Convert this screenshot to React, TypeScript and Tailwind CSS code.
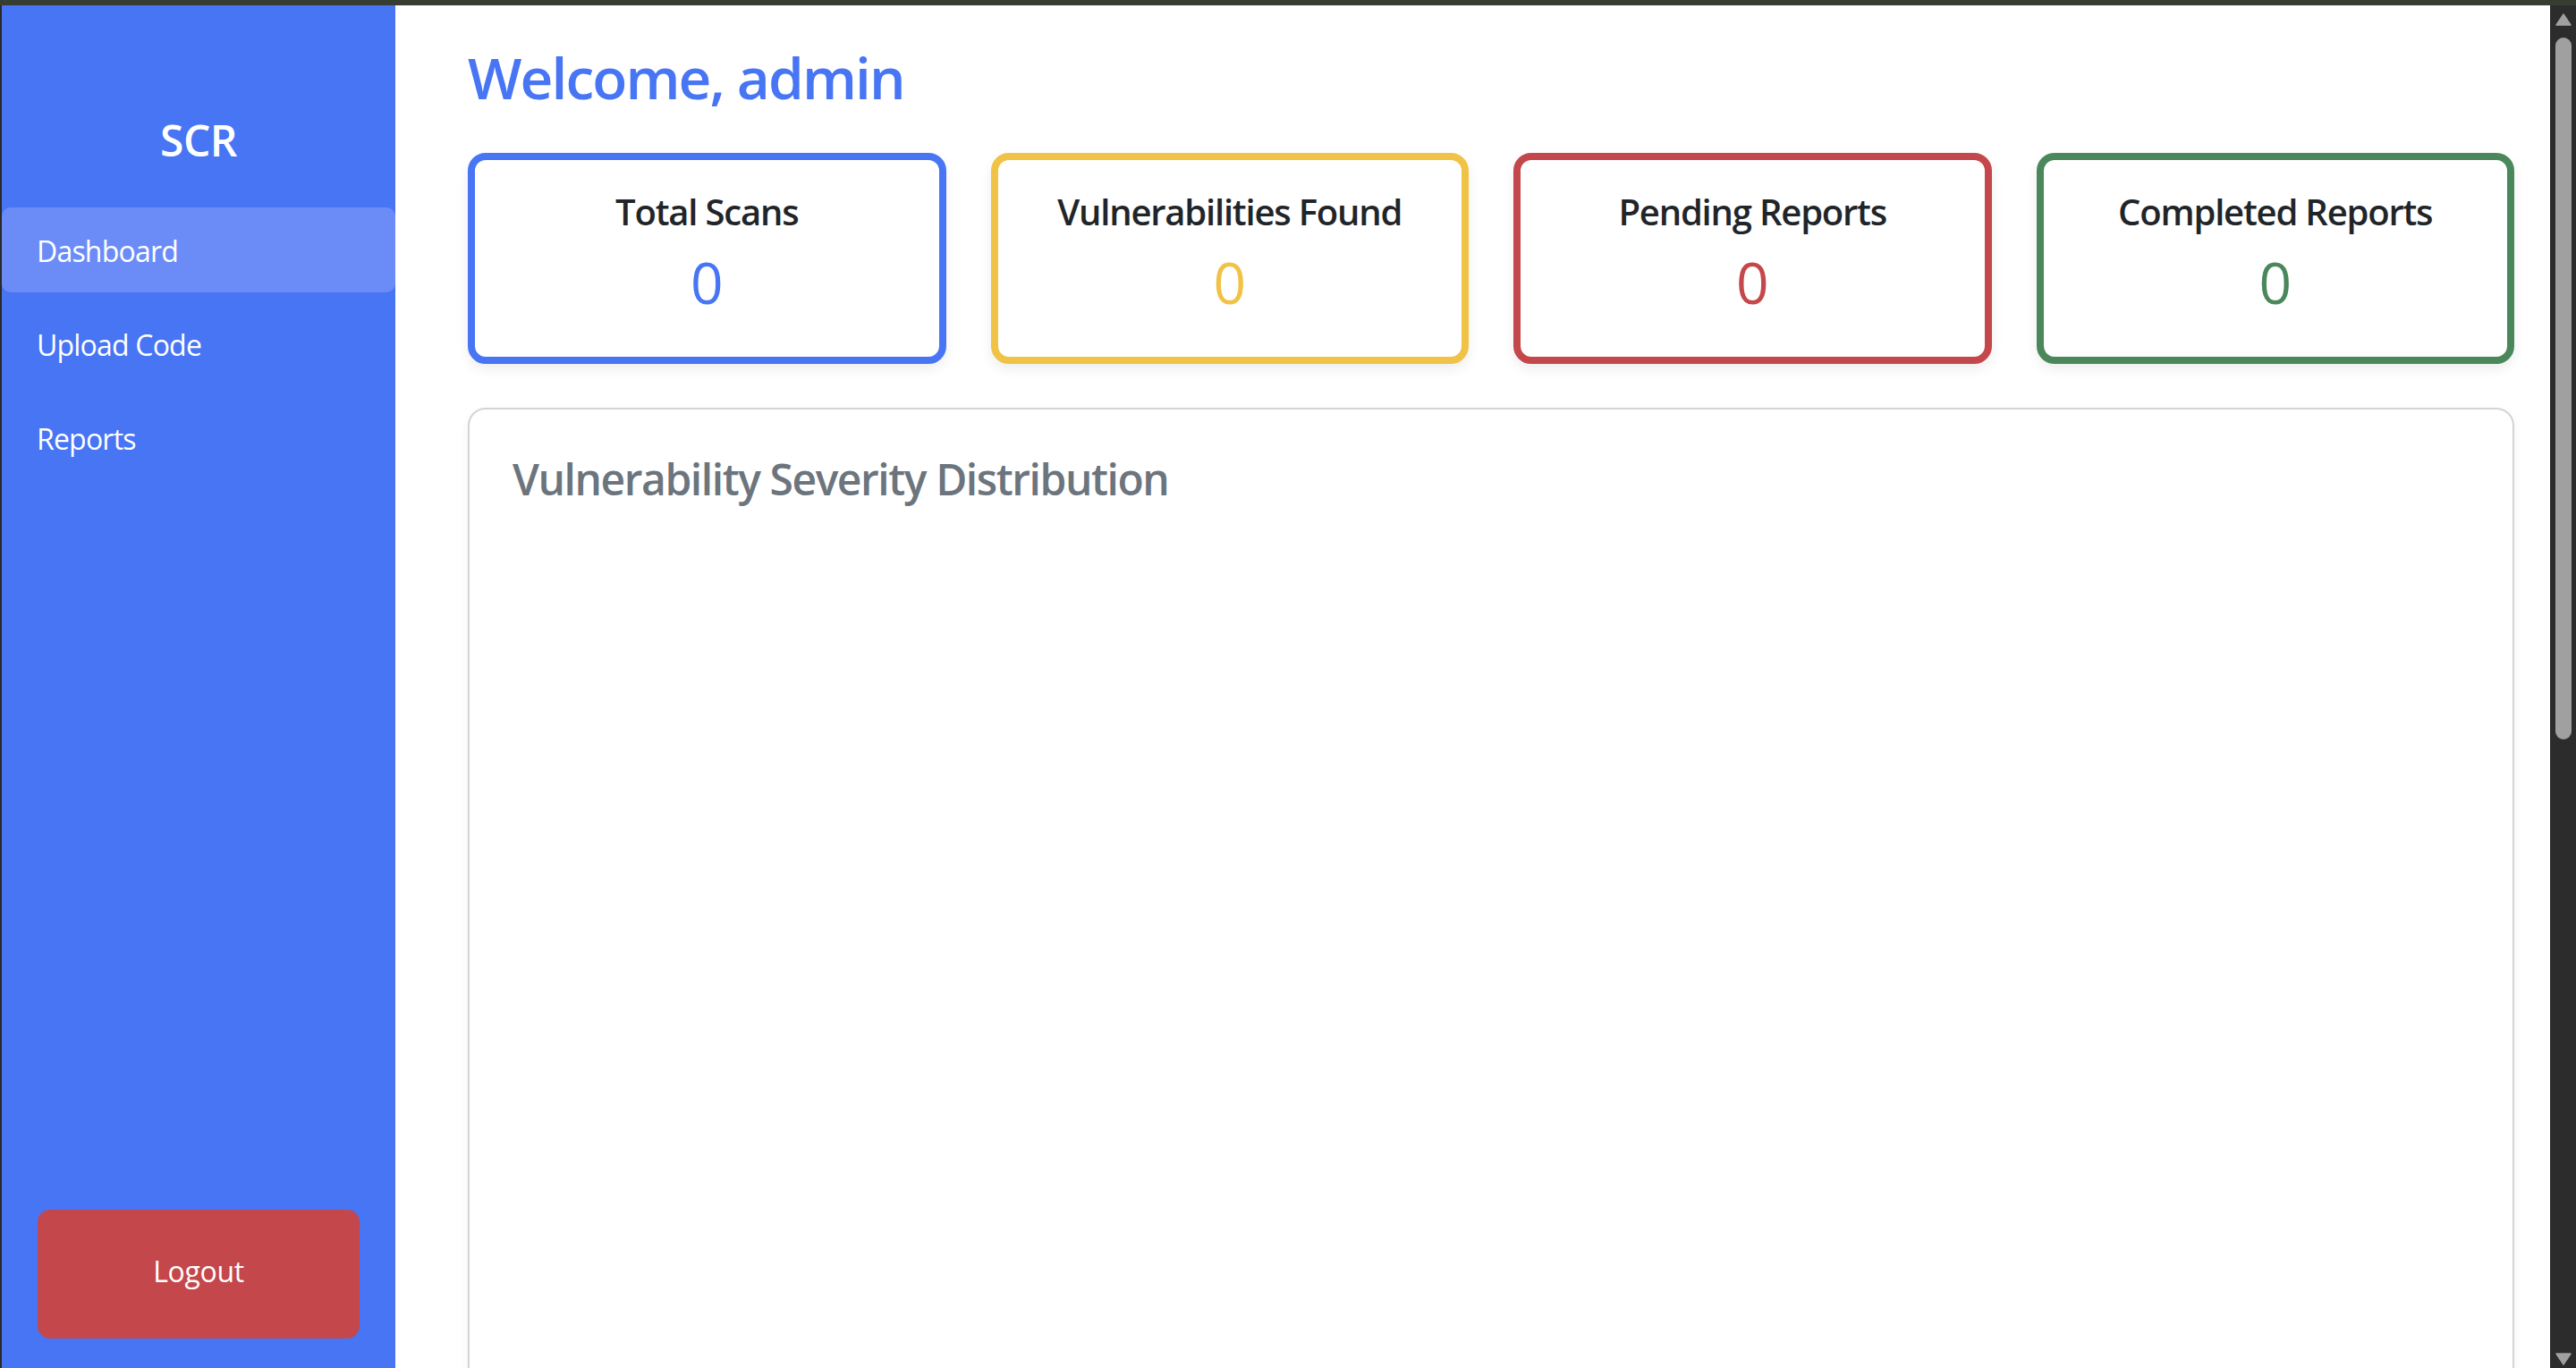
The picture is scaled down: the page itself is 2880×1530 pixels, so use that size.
import React from "react";

type Card = {
  title: string;
  value: number;
  border: string;
  text: string;
};

const cards: Card[] = [
  { title: "Total Scans", value: 0, border: "border-[#4775f3]", text: "text-[#4775f3]" },
  { title: "Vulnerabilities Found", value: 0, border: "border-[#f0c246]", text: "text-[#f0c246]" },
  { title: "Pending Reports", value: 0, border: "border-[#c4474b]", text: "text-[#c4474b]" },
  { title: "Completed Reports", value: 0, border: "border-[#4a875b]", text: "text-[#4a875b]" },
];

function StatCard({ card }: { card: Card }) {
  return (
    <div
      className={`flex h-[236px] flex-col items-center rounded-[20px] border-[8px] bg-white pt-[38px] shadow-[0_6px_14px_rgba(0,0,0,0.07)] ${card.border}`}
    >
      <div className="h-[40px] text-[40px] font-semibold leading-[40px] tracking-[-0.03em] text-[#212529]">
        {card.title}
      </div>
      <div className={`mt-[27px] h-[64px] text-[64px] font-medium leading-[64px] ${card.text}`}>{card.value}</div>
    </div>
  );
}

function Scrollbar() {
  return (
    <div className="flex w-[29px] flex-col items-center bg-[#2c2c2c]">
      <svg width="18" height="14" viewBox="0 0 18 14" className="mt-[9px]">
        <path d="M9 1 L17 13 L1 13 Z" fill="#a0a0a0" strokeLinejoin="round" stroke="#a0a0a0" strokeWidth="1.5" />
      </svg>
      <div className="mt-[13px] h-[785px] w-[18px] rounded-full bg-[#a0a0a0]" />
      <div className="flex-1" />
      <svg width="18" height="14" viewBox="0 0 18 14" className="mb-[3px]">
        <path d="M1 1 L17 1 L9 13 Z" fill="#a0a0a0" strokeLinejoin="round" stroke="#a0a0a0" strokeWidth="1.5" />
      </svg>
    </div>
  );
}

export default function App() {
  return (
    <div className="flex h-screen w-full flex-col overflow-hidden bg-white font-['Open_Sans',sans-serif]">
      <div className="h-[6px] w-full shrink-0 bg-[#363e33]" />
      <div className="flex min-h-0 flex-1">
        <div className="w-[2px] shrink-0 bg-[#292929]" />
        <aside className="flex w-[440px] shrink-0 flex-col bg-[#4775f3] text-white">
          <div className="mt-[127px] h-[48px] text-center text-[48px] font-semibold leading-[48px] tracking-[-0.01em]">
            SCR
          </div>
          <nav className="mt-[51px] flex flex-col gap-[10px] text-[32px] tracking-[-0.025em]">
            <div className="h-[95px] rounded-[10px] bg-[#6b8cf6] pl-[39px] pt-[2px] leading-[93px]">Dashboard</div>
            <div className="h-[95px] rounded-[10px] pl-[39px] pt-[2px] leading-[93px]">Upload Code</div>
            <div className="h-[95px] rounded-[10px] pl-[39px] pt-[2px] leading-[93px]">Reports</div>
          </nav>
          <div className="flex-1" />
          <button className="mx-[40px] mb-[33px] h-[144px] rounded-[14px] bg-[#c4474b] pb-[6px] text-[32px] tracking-[-0.01em] text-white">
            Logout
          </button>
        </aside>
        <main className="min-w-0 flex-1 pl-[81px] pr-[40px] pt-[49px]">
          <h1 className="h-[64px] text-[64px] font-semibold leading-[64px] tracking-[-0.03em] text-[#4775f3]">
            Welcome, admin
          </h1>
          <div className="mt-[52px] grid grid-cols-4 gap-[50px]">
            {cards.map((c) => (
              <StatCard key={c.title} card={c} />
            ))}
          </div>
          <section className="mt-[49px] h-[1400px] rounded-[20px] border-[2px] border-[#d4d4d4] bg-white px-[48px] pt-[54px] shadow-[0_4px_12px_rgba(0,0,0,0.05)]">
            <h2 className="h-[48px] text-[48px] font-semibold leading-[48px] tracking-[-0.03em] text-[#6c757d]">
              Vulnerability Severity Distribution
            </h2>
          </section>
        </main>
        <Scrollbar />
      </div>
    </div>
  );
}
